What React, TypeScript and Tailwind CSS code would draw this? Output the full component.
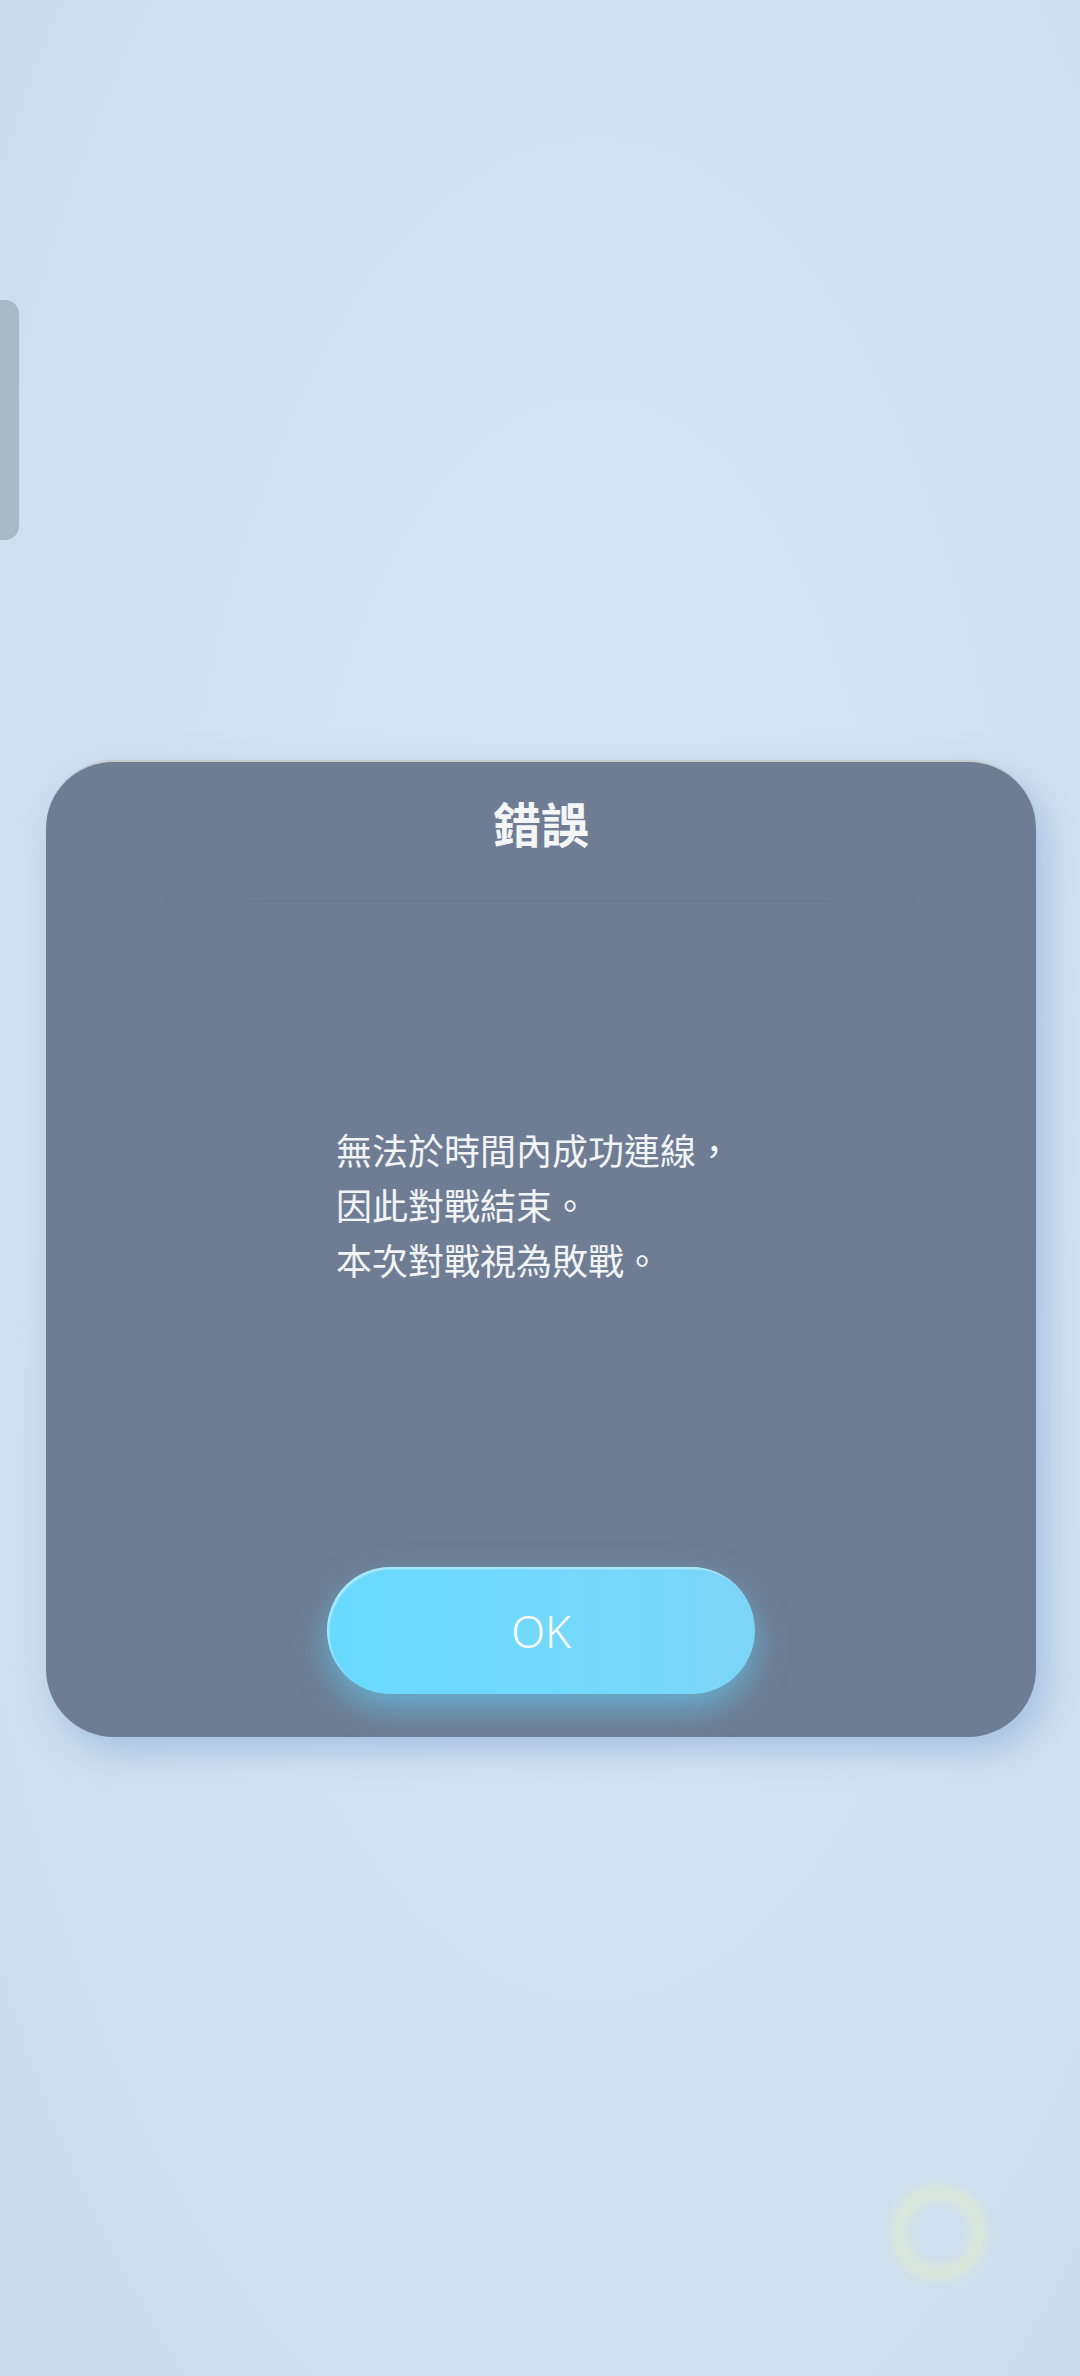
export default function App() {
  return (
    <div
      className="relative w-full min-h-[2376px] overflow-hidden bg-[radial-gradient(ellipse_at_55%_45%,#d8e6f4_0%,#d3e3f2_45%,#cadcec_100%)]"
      style={{ fontFamily: '"Noto Sans", "Noto Sans CJK TC", sans-serif' }}
    >
      {/* side handle */}
      <div className="absolute left-0 top-[300px] h-[240px] w-[19px] rounded-r-[14px] bg-[#a9b8c2]" />

      {/* faint loading ring */}
      <div className="absolute left-[890px] top-[2184px] h-[98px] w-[98px] rounded-full border-[18px] border-[#e2ebcf] opacity-60 blur-[4px]" />

      <div className="pl-[46px] pt-[760px]">
        <div className="flex h-[977px] w-[990px] flex-col items-center rounded-[68px] border-t-2 border-[#c4c9d0] bg-[#6e7d93] shadow-[10px_14px_34px_rgba(130,165,215,0.55)]">
          <h1
            className="mt-[26px] text-[48px] font-bold leading-[68px] text-[#f4f5f7]"
            style={{ fontFamily: '"Noto Sans CJK TC", sans-serif' }}
          >
            錯誤
          </h1>
          <div className="mt-[44px] h-[2px] w-[727px] bg-[linear-gradient(90deg,rgba(104,121,146,0)_0%,#687992_15%,#687992_85%,rgba(104,121,146,0)_100%)] shadow-[0_6px_14px_rgba(120,138,160,0.5)]" />

          <div
            className="mt-[220px] w-[410px] text-[36px] leading-[55px] text-[#f2f4f7]"
            style={{ fontFamily: '"Noto Sans CJK TC", sans-serif' }}
          >
            <p>無法於時間內成功連線，</p>
            <p>因此對戰結束。</p>
            <p>本次對戰視為敗戰。</p>
          </div>

          <button className="mt-[280px] flex h-[127px] w-[428px] items-center justify-center rounded-full bg-[linear-gradient(90deg,#68dafe_0%,#72d9fc_50%,#7dd5f6_100%)] text-[44px] font-light text-white shadow-[0_14px_32px_rgba(95,215,255,0.55),inset_2px_2px_2px_rgba(255,255,255,0.45)]">
            OK
          </button>
        </div>
      </div>
    </div>
  );
}
